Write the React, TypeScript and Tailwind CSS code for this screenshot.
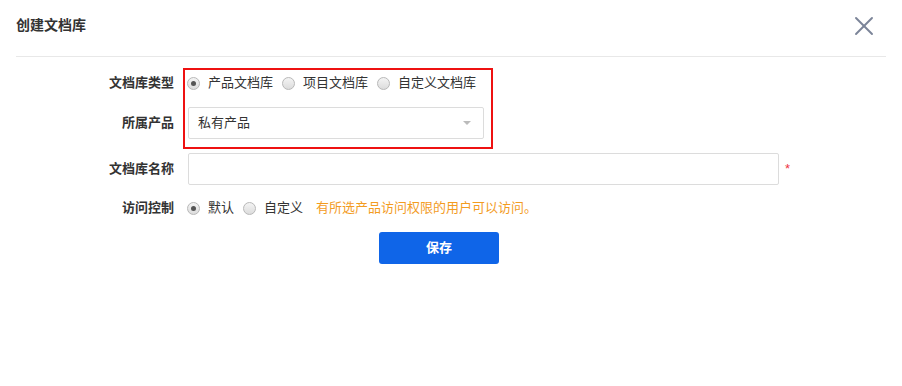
import { X } from "lucide-react";

const font = { fontFamily: '"Liberation Sans", "Noto Sans CJK SC", sans-serif' };

const Radio = ({ checked, label }: { checked?: boolean; label: string }) => (
  <label className="flex items-center gap-[8px] mr-[9px]">
    <span className="w-[13px] h-[13px] rounded-full border border-[#b8b8b8] bg-gradient-to-b from-[#f4f4f4] to-[#dcdcdc] flex items-center justify-center">
      {checked && <span className="w-[5px] h-[5px] rounded-full bg-[#555]" />}
    </span>
    <span className="text-[13px] text-[#333]">{label}</span>
  </label>
);

const Label = ({ children }: { children: string }) => (
  <div className="w-[174px] text-right text-[13px] font-bold text-[#333] shrink-0">{children}</div>
);

export default function App() {
  return (
    <div className="w-[902px] h-[386px] bg-white relative" style={font}>
      {/* Header */}
      <div className="mx-[16px] h-[57px] flex items-center justify-between border-b border-[#e8e8e8]">
        <h2 className="text-[14px] font-bold text-[#333] -mt-[5px]">创建文档库</h2>
        <X size={32} strokeWidth={1.4} className="text-[#7b8498] mr-[6px] -mt-[5px]" />
      </div>

      {/* Form */}
      <div className="pt-[10px] flex flex-col">
        <div className="h-[32px] flex items-center gap-[13px]">
          <Label>文档库类型</Label>
          <div className="flex items-center">
            <Radio checked label="产品文档库" />
            <Radio label="项目文档库" />
            <Radio label="自定义文档库" />
          </div>
        </div>

        <div className="h-[32px] mt-[8px] flex items-center gap-[14px]">
          <Label>所属产品</Label>
          <div className="w-[296px] h-[32px] border border-[#dcdcdc] rounded-[2px] flex items-center justify-between px-[9px]">
            <span className="text-[13px] text-[#333]">私有产品</span>
            <span className="w-0 h-0 border-l-[4px] border-r-[4px] border-t-[4px] border-l-transparent border-r-transparent border-t-[#bbb] mr-[3px]" />
          </div>
        </div>

        <div className="h-[32px] mt-[14px] flex items-center gap-[14px]">
          <Label>文档库名称</Label>
          <div className="w-[591px] h-[32px] border border-[#dcdcdc] rounded-[2px]" />
          <span className="text-[#e34] text-[13px] -ml-[8px]">*</span>
        </div>

        <div className="h-[32px] mt-[7px] flex items-center gap-[13px]">
          <Label>访问控制</Label>
          <div className="flex items-center">
            <Radio checked label="默认" />
            <Radio label="自定义" />
            <span className="text-[13px] text-[#f39c1f] ml-[4px]">有所选产品访问权限的用户可以访问。</span>
          </div>
        </div>

        <div className="mt-[8px] flex">
          <button className="w-[120px] h-[32px] ml-[379px] rounded-[3px] bg-[#0f65e8] text-white text-[13px] font-bold">
            保存
          </button>
        </div>
      </div>

      {/* Annotation highlight */}
      <div className="absolute left-[183px] top-[68px] w-[310px] h-[81px] border-2 border-[#ee1111] pointer-events-none" />
    </div>
  );
}
